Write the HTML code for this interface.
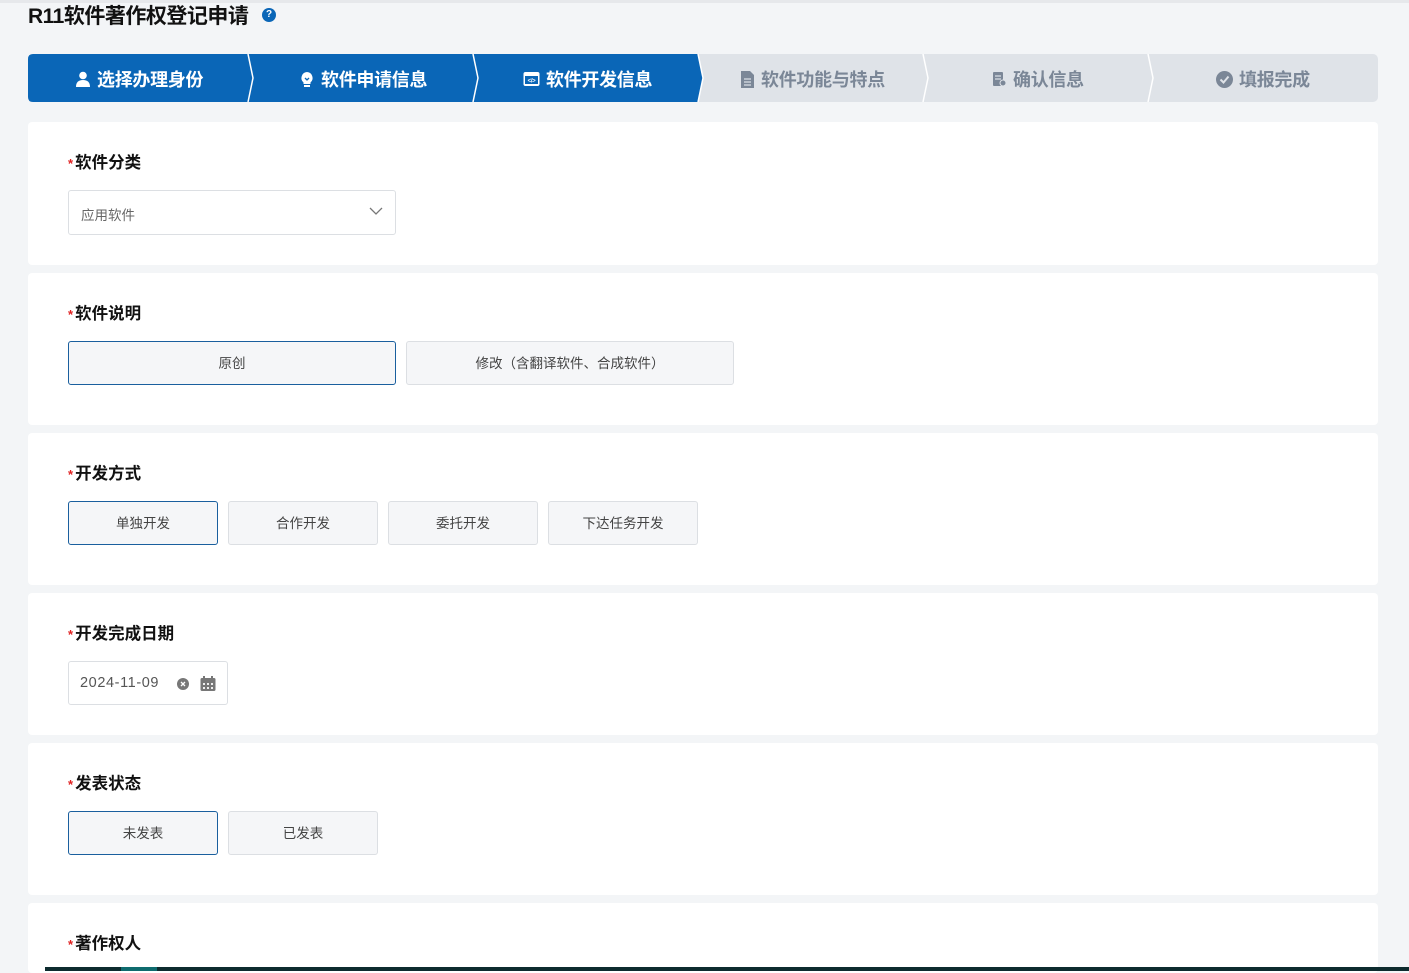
<!DOCTYPE html>
<html><head><meta charset="utf-8"><style>
*{margin:0;padding:0;box-sizing:border-box}
body{width:1409px;height:971px;overflow:hidden;background:#f3f5f7;font-family:"Liberation Sans","Noto Sans CJK SC",sans-serif;position:relative}
.topline{position:absolute;left:0;top:0;width:1409px;height:3px;background:#e6e8eb}
h1{position:absolute;left:28px;top:0px;font-size:21px;font-weight:bold;color:#111;letter-spacing:-0.5px}
.q{position:absolute;left:262px;top:8px;width:14px;height:14px;border-radius:50%;background:#0a66b7;color:#fff;font-size:10px;font-weight:bold;text-align:center;line-height:14px}
.steps{position:absolute;left:28px;top:54px}
.st{position:absolute;top:66px;font-size:18px;font-weight:bold;display:flex;align-items:center;gap:6px;letter-spacing:-0.3px}
.card{position:absolute;left:28px;width:1350px;background:#fff;border-radius:4px}
.lbl{position:absolute;left:40px;font-size:16.5px;font-weight:bold;color:#111}
.lbl b{color:#e02020;font-size:13px;margin-right:2px}
.btn{position:absolute;height:44px;border:1px solid #dcdfe3;background:#f5f6f8;border-radius:3px;font-size:13.5px;color:#444;display:flex;align-items:center;justify-content:center;padding-bottom:2px}
.btn.on{border-color:#1a5f9e}
</style></head><body>
<div class="topline"></div>
<h1>R11软件著作权登记申请</h1>
<div class="q">?</div>
<svg class="steps" width="1350" height="48" viewBox="0 0 1350 48">
<rect x="0" y="0" width="1350" height="48" rx="5" fill="#dfe3e8"/>
<path d="M5 0 H670 L675 24 L670 48 H5 Q0 48 0 43 V5 Q0 0 5 0Z" fill="#0a66b7"/>
<g stroke="#fff" stroke-width="1.5" fill="none">
<polyline points="220,0 225,24 220,48"/>
<polyline points="445,0 450,24 445,48"/>
<polyline points="670,0 675,24 670,48"/>
<polyline points="895,0 900,24 895,48"/>
<polyline points="1120,0 1125,24 1120,48"/>
</g>
</svg>
<div class="st" style="left:75px;color:#fff"><svg width="16" height="16" viewBox="0 0 16 16"><circle cx="8" cy="4.5" r="3.8" fill="#fff"/><path d="M1 16 Q1 9 8 9 Q15 9 15 16Z" fill="#fff"/></svg>选择办理身份</div>
<div class="st" style="left:299px;color:#fff"><svg width="16" height="16" viewBox="0 0 16 16"><path d="M8 1 A6 6 0 0 1 11.5 11.5 V13 H4.5 V11.5 A6 6 0 0 1 8 1Z" fill="#fff"/><rect x="5" y="14" width="6" height="2" fill="#fff"/><path d="M6 7 L8 9 L10 7" stroke="#0a66b7" stroke-width="1.3" fill="none"/></svg>软件申请信息</div>
<div class="st" style="left:523px;color:#fff"><svg width="17" height="16" viewBox="0 0 17 16"><rect x="0.5" y="1" width="16" height="14" rx="2" fill="#fff"/><rect x="2" y="5" width="13" height="8" fill="#0a66b7"/><text x="8.5" y="11.5" font-size="6" fill="#fff" text-anchor="middle" font-family="Liberation Sans">&lt;/&gt;</text></svg>软件开发信息</div>
<div class="st" style="left:740px;color:#7b8797"><svg width="15" height="17" viewBox="0 0 15 17"><path d="M1 0 H10 L14 4 V17 H1Z" fill="#7b8797"/><g stroke="#dfe3e8" stroke-width="1.2"><line x1="4" y1="8" x2="11" y2="8"/><line x1="4" y1="11" x2="11" y2="11"/><line x1="4" y1="14" x2="11" y2="14"/></g></svg>软件功能与特点</div>
<div class="st" style="left:992px;color:#7b8797"><svg width="15" height="16" viewBox="0 0 15 16"><rect x="1" y="1" width="10" height="14" rx="1" fill="#7b8797"/><g stroke="#dfe3e8" stroke-width="1.2"><line x1="3" y1="5" x2="9" y2="5"/><line x1="3" y1="8" x2="9" y2="8"/></g><circle cx="11" cy="12" r="3" fill="#7b8797" stroke="#dfe3e8"/></svg>确认信息</div>
<div class="st" style="left:1216px;color:#7b8797"><svg width="17" height="17" viewBox="0 0 17 17"><circle cx="8.5" cy="8.5" r="8.5" fill="#7b8797"/><path d="M4.5 8.5 L7.5 11.5 L12.5 5.5" stroke="#dfe3e8" stroke-width="2" fill="none"/></svg>填报完成</div>

<div class="card" style="top:122px;height:143px">
<div class="lbl" style="top:27px"><b>*</b>软件分类</div>
<div style="position:absolute;left:40px;top:68px;width:328px;height:45px;border:1px solid #dcdfe3;border-radius:3px;font-size:13.5px;color:#666;padding:13px 0 0 12px">应用软件
<svg style="position:absolute;right:12px;top:16px" width="14" height="9" viewBox="0 0 14 9"><polyline points="1,1 7,7 13,1" stroke="#777" stroke-width="1.3" fill="none"/></svg></div>
</div>
<div class="card" style="top:273px;height:152px">
<div class="lbl" style="top:27px"><b>*</b>软件说明</div>
<div class="btn on" style="left:40px;top:68px;width:328px">原创</div>
<div class="btn" style="left:378px;top:68px;width:328px">修改（含翻译软件、合成软件）</div>
</div>
<div class="card" style="top:433px;height:152px">
<div class="lbl" style="top:27px"><b>*</b>开发方式</div>
<div class="btn on" style="left:40px;top:68px;width:150px">单独开发</div>
<div class="btn" style="left:200px;top:68px;width:150px">合作开发</div>
<div class="btn" style="left:360px;top:68px;width:150px">委托开发</div>
<div class="btn" style="left:520px;top:68px;width:150px">下达任务开发</div>
</div>
<div class="card" style="top:593px;height:142px">
<div class="lbl" style="top:27px"><b>*</b>开发完成日期</div>
<div style="position:absolute;left:40px;top:68px;width:160px;height:44px;border:1px solid #dcdfe3;border-radius:3px;font-size:14.5px;color:#555;padding:13px 0 0 11px;letter-spacing:0.6px">2024-11-09
<svg style="position:absolute;left:108px;top:16px" width="12" height="12" viewBox="0 0 12 12"><circle cx="6" cy="6" r="6" fill="#777"/><path d="M4 4 L8 8 M8 4 L4 8" stroke="#fff" stroke-width="1.3"/></svg>
<svg style="position:absolute;left:131px;top:14px" width="16" height="15" viewBox="0 0 16 15"><rect x="0.5" y="2" width="15" height="13" rx="1.5" fill="#777"/><rect x="3" y="0" width="2" height="4" fill="#777"/><rect x="11" y="0" width="2" height="4" fill="#777"/><g fill="#eee"><rect x="3" y="7" width="2" height="2"/><rect x="7" y="7" width="2" height="2"/><rect x="11" y="7" width="2" height="2"/><rect x="3" y="11" width="2" height="2"/><rect x="7" y="11" width="2" height="2"/><rect x="11" y="11" width="2" height="2"/></g></svg></div>
</div>
<div class="card" style="top:743px;height:152px">
<div class="lbl" style="top:27px"><b>*</b>发表状态</div>
<div class="btn on" style="left:40px;top:68px;width:150px">未发表</div>
<div class="btn" style="left:200px;top:68px;width:150px">已发表</div>
</div>
<div class="card" style="top:903px;height:70px">
<div class="lbl" style="top:27px"><b>*</b>著作权人</div>
</div>
<div style="position:absolute;left:45px;top:967px;width:1364px;height:4px;background:#0d2b2e"></div>
<div style="position:absolute;left:121px;top:967px;width:36px;height:4px;background:#0e6b6e"></div>
</body></html>
